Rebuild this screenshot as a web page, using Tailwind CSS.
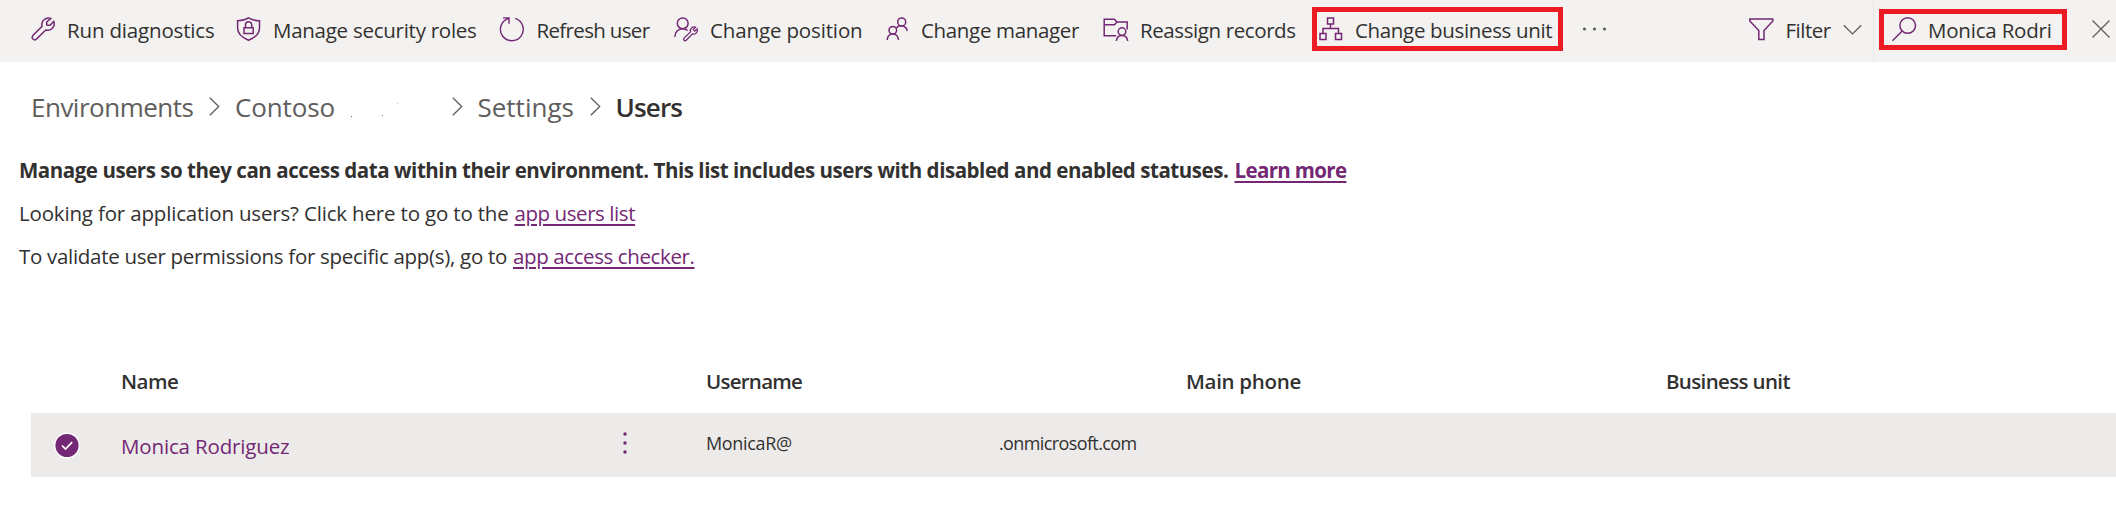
<!DOCTYPE html>
<html lang="en">
<head>
<meta charset="utf-8">
<title>Users</title>
<script src="https://cdn.jsdelivr.net/npm/@tailwindcss/browser@4"></script>
</head>
<body class="h-[510px] w-[2116px] overflow-hidden bg-white font-['Open_Sans','Noto_Sans',sans-serif] text-[20.5px] text-[#323130]">
<header class="flex h-[62px] items-center whitespace-nowrap bg-[#f3f2f1] pb-[2px] pl-[31px]">
  <div class="flex w-[205px] shrink-0 items-center">
    <svg class="mb-[2px] mr-[12px] size-6 shrink-0 overflow-visible" viewBox="0 0 24 24" fill="none" stroke="#742774" stroke-width="1.5"><path d="M19.8 1.4A6.6 6.6 0 0 0 11.1 9.3L1.6 18.8a2.6 2.6 0 0 0 3.6 3.6L14.7 13A6.6 6.6 0 0 0 22.8 4.5L19.1 8.2 15.8 8.1 15.7 5z"/></svg>
    <span class="tracking-[-0.167px]">Run diagnostics</span>
  </div>
  <div class="flex w-[264px] shrink-0 items-center">
    <svg class="mb-[2px] mr-[13px] size-6 shrink-0 overflow-visible" viewBox="0 0 24 24" fill="none" stroke="#742774" stroke-width="1.5"><path d="M12.5.9C9.5 2.8 5.500 3.700 1.600 3.700V11c0 6 5 9.900 10.900 12.300C18.400 20.900 23.500 17 23.500 11V3.700C19.500 3.700 15.500 2.800 12.500.9z"/><path d="M8 10.700h9.200v5.700H8zM9.500 10.700V7.800a3.100 3.100 0 0 1 6.200 0v2.900"/></svg>
    <span class="tracking-[-0.26px]">Manage security roles</span>
  </div>
  <div class="flex w-[174px] shrink-0 items-center">
    <svg class="mb-[2px] mr-[12.5px] size-6 shrink-0 overflow-visible" viewBox="0 0 24 24" fill="none" stroke="#742774" stroke-width="1.4"><path d="M15.200 1.400A11.400 11.400 0 1 1 8.800 1.300M3 .9h6v5.800"/></svg>
    <span class="tracking-[-0.66px]">Refresh user</span>
  </div>
  <div class="flex w-[212px] shrink-0 items-center">
    <svg class="mb-[2px] mr-[12px] size-6 shrink-0 overflow-visible" viewBox="0 0 24 24" fill="none" stroke="#742774" stroke-width="1.5"><circle cx="8.700" cy="6.300" r="5.400"/><path d="M.8 20c0-4.800 3.300-8.300 7.900-8.300 2 0 3.600.6 5 1.800"/><path d="M21.500 10.200a3.800 3.800 0 0 0-5 4.700L10 21.100a1.500 1.500 0 0 0 2.200 2.100l6.300-6.300a3.800 3.800 0 0 0 4.700-5l-2.300 2.200-1.600-1.600z" stroke-width="1.300"/></svg>
    <span class="tracking-[-0.14px]">Change position</span>
  </div>
  <div class="flex w-[217px] shrink-0 items-center">
    <svg class="mb-[2px] mr-[11px] size-6 shrink-0 overflow-visible" viewBox="0 0 24 24" fill="none" stroke="#742774" stroke-width="1.5"><circle cx="6.800" cy="13.200" r="3.800"/><path d="M1.200 23c.3-3.800 2.400-6 5.600-6s5.300 2.200 5.700 6"/><circle cx="15.700" cy="4.900" r="4"/><path d="M10.300 11c1.200-1.500 3-2.300 5.200-2.100 3.300.1 5.300 1.900 5.800 4.900"/></svg>
    <span class="tracking-[-0.338px]">Change manager</span>
  </div>
  <div class="flex w-[209px] shrink-0 items-center">
    <svg class="mb-[2px] mr-[13px] size-6 shrink-0 overflow-visible" viewBox="0 0 24 24" fill="none" stroke="#742774" stroke-width="1.500"><path d="M13.200 18.800H1.200V2.200h10.200l2.500 2.700h10.300v7.600M1.200 7.700h10.300l2.400-2.800"/><circle cx="19" cy="14.600" r="3.800"/><path d="M13.300 24c.4-3.500 2.500-5.600 5.700-5.600s5.300 2.100 5.700 5.600"/></svg>
    <span class="tracking-[-0.4px]">Reassign records</span>
  </div>
  <div class="mt-[-2px] flex h-[44px] w-[251px] shrink-0 items-center border-[5px] border-[#ed1c24] pl-[1px] pt-[2px]">
    <svg class="mb-[2px] mr-[13px] size-6 shrink-0 overflow-visible" viewBox="0 0 24 24" fill="none" stroke="#742774" stroke-width="1.500"><path d="M9.500 1h6v6h-6zM2 16.500h6v6H2zM17.500 16.500h6v6h-6zM12.500 7v4.500M5 16.500v-5h15.500v5"/></svg>
    <span class="tracking-[-0.339px]">Change business unit</span>
  </div>
  <svg class="mb-[2px] ml-[19px] h-6 w-[26px] shrink-0" viewBox="0 0 26 24" fill="#605e5c"><circle cx="2.500" cy="12" r="1.600"/><circle cx="12.500" cy="12" r="1.600"/><circle cx="22.500" cy="12" r="1.600"/></svg>
  <div class="ml-[141px] flex w-[124px] shrink-0 items-center">
    <svg class="mb-[2px] mr-[12.500px] size-6 shrink-0 overflow-visible" viewBox="0 0 24 24" fill="none" stroke="#742774" stroke-width="1.500"><path d="M.8 2h23v2L15 13.500v9h-5.200v-9L.8 4z"/></svg>
    <span class="w-[45.500px] tracking-[-0.5px]">Filter</span>
    <svg class="ml-[12px] h-[12px] w-[19px] shrink-0" viewBox="0 0 19 12" fill="none" stroke="#605e5c" stroke-width="1.300"><path d="M.8 1.200l8.700 8.700 8.700-8.700"/></svg>
  </div>
  <div class="-mb-[2px] h-[62px] w-px shrink-0 bg-[#e9e8e7]"></div>
  <div class="ml-[5px] mt-[-1px] flex h-[41px] w-[188px] shrink-0 items-center border-[5px] border-[#ed1c24] pl-[8px] pt-px">
    <svg class="mb-[2px] mr-[12px] size-6 shrink-0 overflow-visible" viewBox="0 0 24 24" fill="none" stroke="#742774" stroke-width="1.500"><circle cx="15.700" cy="8.500" r="7.800"/><path d="M10.200 14L.5 23.700"/></svg>
    <span class="tracking-[-0.2px]">Monica Rodri</span>
  </div>
  <svg class="mb-[2px] ml-[25px] size-[18px] shrink-0" viewBox="0 0 18 18" fill="none" stroke="#605e5c" stroke-width="1.300"><path d="M.5.5l17 17M17.500.5l-17 17"/></svg>
</header>

<nav class="mt-[25px] flex h-10 items-center whitespace-nowrap pl-[31px] text-[26px] text-[#605e5c]">
  <span class="w-[178px] tracking-[-0.503px]">Environments</span>
  <svg class="mb-[2px] h-[19px] w-[11px]" viewBox="0 0 11 19" fill="none" stroke="#605e5c" stroke-width="1.300"><path d="M.8.800l8.900 8.700-8.900 8.700"/></svg>
  <span class="ml-[15px] w-[115px] tracking-[-0.127px]">Contoso</span>
  <svg class="mt-[6px] h-[18px] w-[48px]" viewBox="0 0 48 18"><path d="M1 15h1v1H1z" fill="#605e5c"/><path d="M32 14h1v1h-1z" fill="#7d8a96"/><path d="M47 2h1v1h-1z" fill="#b5c3cf"/></svg>
  <svg class="mb-[2px] ml-[53.500px] h-[19px] w-[11px]" viewBox="0 0 11 19" fill="none" stroke="#605e5c" stroke-width="1.300"><path d="M.8.800l8.900 8.700-8.900 8.700"/></svg>
  <span class="ml-[15px] w-[112px]">Settings</span>
  <svg class="mb-[2px] h-[19px] w-[11px]" viewBox="0 0 11 19" fill="none" stroke="#605e5c" stroke-width="1.300"><path d="M.8.800l8.900 8.700-8.900 8.700"/></svg>
  <span class="ml-[15px] font-semibold tracking-[-0.85px] text-[#323130]">Users</span>
</nav>

<section class="mt-[22px] whitespace-nowrap pl-[19px] leading-[43px]">
  <p class="flex font-bold"><span class="w-[1215.500px] tracking-[-0.455px]">Manage users so they can access data within their environment. This list includes users with disabled and enabled statuses.</span><a class="tracking-[-0.646px] text-[#742774] underline decoration-2 underline-offset-[3px] [text-decoration-skip-ink:none]">Learn more</a></p>
  <p class="flex"><span class="w-[495.500px] tracking-[-0.170px]">Looking for application users? Click here to go to the</span><a class="tracking-[-0.43px] text-[#742774] underline decoration-2 underline-offset-[3px]">app users list</a></p>
  <p class="flex"><span class="w-[494px] tracking-[-0.295px]">To validate user permissions for specific app(s), go to</span><a class="tracking-[-0.394px] text-[#742774] underline decoration-2 underline-offset-[3px]">app access checker.</a></p>
</section>

<section class="mt-[72px] whitespace-nowrap pl-[31px]">
  <div class="flex h-[63px] items-center pl-[90px] font-semibold">
    <span class="w-[585px] tracking-[-0.502px]">Name</span>
    <span class="w-[480px] tracking-[-0.75px]">Username</span>
    <span class="w-[480px] tracking-[-0.296px]">Main phone</span>
    <span class="tracking-[-0.64px]">Business unit</span>
  </div>
  <div class="flex h-[64px] items-center bg-[#edebe9] pl-[23px]">
    <svg class="size-[27px] shrink-0" viewBox="0 0 27 27" fill="none"><circle cx="13" cy="13.500" r="13" fill="#fff"/><circle cx="13" cy="13.500" r="11.600" fill="#742774"/><path d="M8 13.500l3.500 3.500 6.700-6.800" stroke="#fff" stroke-width="1.700"/></svg>
    <span class="ml-[40px] mt-[2px] w-[498px] tracking-[-0.15px] text-[#742774]">Monica Rodriguez</span>
    <svg class="mb-[4px] h-[24px] w-[10px] shrink-0" viewBox="0 0 10 24" fill="#742774"><circle cx="6" cy="3" r="1.700"/><circle cx="6" cy="12" r="1.700"/><circle cx="6" cy="21" r="1.700"/></svg>
    <span class="mb-[3px] ml-[77px] w-[293px] text-[18px] tracking-[-0.333px]">MonicaR@</span>
    <span class="mb-[3px] text-[18px] tracking-[-0.61px]">.onmicrosoft.com</span>
  </div>
</section>
</body>
</html>
